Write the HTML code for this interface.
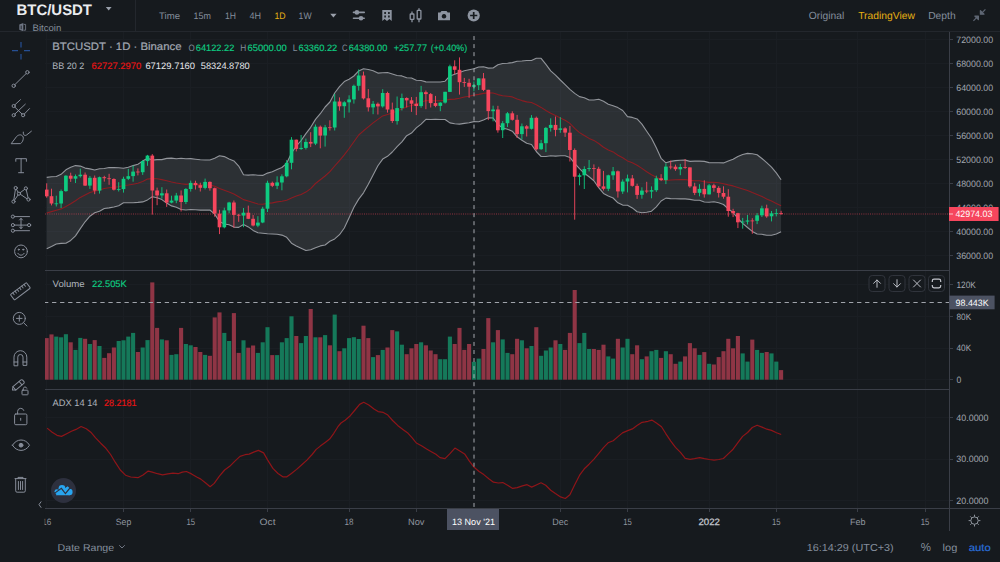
<!DOCTYPE html>
<html><head><meta charset="utf-8"><title>BTC/USDT</title>
<style>
html,body{margin:0;padding:0;background:#161a1e;}
body{width:1000px;height:562px;position:relative;overflow:hidden;font-family:"Liberation Sans",Arial,sans-serif;}
</style></head><body>
<svg width="1000" height="562" viewBox="0 0 1000 562" style="position:absolute;left:0;top:0" font-family="Liberation Sans, Arial, sans-serif" text-rendering="geometricPrecision">
<rect width="1000" height="562" fill="#161a1e"/>
<g stroke="#1a1e23" stroke-width="1" shape-rendering="crispEdges">
<line x1="46.5" y1="32" x2="46.5" y2="508"/>
<line x1="123.5" y1="32" x2="123.5" y2="508"/>
<line x1="190.5" y1="32" x2="190.5" y2="508"/>
<line x1="267.5" y1="32" x2="267.5" y2="508"/>
<line x1="349.5" y1="32" x2="349.5" y2="508"/>
<line x1="416.5" y1="32" x2="416.5" y2="508"/>
<line x1="560.5" y1="32" x2="560.5" y2="508"/>
<line x1="627.5" y1="32" x2="627.5" y2="508"/>
<line x1="709.5" y1="32" x2="709.5" y2="508"/>
<line x1="776.5" y1="32" x2="776.5" y2="508"/>
<line x1="857.5" y1="32" x2="857.5" y2="508"/>
<line x1="925.5" y1="32" x2="925.5" y2="508"/>
<line x1="45" y1="255.5" x2="949" y2="255.5"/>
<line x1="45" y1="231.5" x2="949" y2="231.5"/>
<line x1="45" y1="207.5" x2="949" y2="207.5"/>
<line x1="45" y1="183.5" x2="949" y2="183.5"/>
<line x1="45" y1="159.5" x2="949" y2="159.5"/>
<line x1="45" y1="135.5" x2="949" y2="135.5"/>
<line x1="45" y1="111.5" x2="949" y2="111.5"/>
<line x1="45" y1="87.5" x2="949" y2="87.5"/>
<line x1="45" y1="63.5" x2="949" y2="63.5"/>
<line x1="45" y1="39.5" x2="949" y2="39.5"/>
<line x1="45" y1="379.5" x2="949" y2="379.5"/>
<line x1="45" y1="348.5" x2="949" y2="348.5"/>
<line x1="45" y1="316.5" x2="949" y2="316.5"/>
<line x1="45" y1="284.5" x2="949" y2="284.5"/>
<line x1="45" y1="500.5" x2="949" y2="500.5"/>
<line x1="45" y1="459.5" x2="949" y2="459.5"/>
<line x1="45" y1="417.5" x2="949" y2="417.5"/>
</g>
<defs><clipPath id="cp"><rect x="45" y="32" width="904" height="476"/></clipPath></defs>
<g clip-path="url(#cp)">
<polygon points="46.7,177.4 51.5,176.8 56.3,176.5 61.1,174.3 65.9,169.8 70.7,167.2 75.5,165.6 80.3,166.1 85.1,168.1 89.9,168.9 94.7,170.0 99.5,168.7 104.3,168.5 109.1,167.5 113.9,167.6 118.7,167.8 123.5,168.2 128.3,167.3 133.1,165.6 137.9,164.2 142.7,161.1 147.5,158.3 152.3,160.1 157.1,159.6 161.9,159.6 166.7,158.4 171.5,158.1 176.3,158.7 181.1,158.2 185.9,158.8 190.7,158.6 195.5,159.2 200.3,159.8 205.1,160.0 209.9,160.0 214.7,158.3 219.5,155.7 224.3,156.6 229.1,158.9 233.9,160.9 238.7,166.1 243.5,174.7 248.3,175.1 253.1,174.7 257.9,175.2 262.7,175.4 267.5,173.1 272.3,171.8 277.1,169.6 281.9,167.5 286.7,163.3 291.5,152.9 296.3,146.2 301.1,140.5 305.9,133.6 310.7,127.3 315.5,119.4 320.3,113.7 325.1,107.0 329.9,102.0 334.7,93.0 339.5,86.6 344.3,81.6 349.1,79.2 353.9,76.0 358.7,70.9 363.5,68.8 368.3,69.5 373.1,70.8 377.9,73.1 382.7,72.7 387.5,72.6 392.3,74.1 397.1,75.5 401.9,75.9 406.7,77.7 411.5,78.0 416.3,80.2 421.1,80.5 425.9,81.9 430.7,82.0 435.5,82.0 440.3,82.0 445.1,81.2 449.9,75.9 454.7,74.3 459.5,72.4 464.3,70.7 469.1,69.7 473.9,68.7 478.7,67.0 483.5,66.8 488.3,68.1 493.1,68.0 497.9,64.8 502.7,63.5 507.5,63.2 512.3,62.6 517.1,61.2 521.9,61.0 526.7,60.5 531.5,60.5 536.3,58.2 541.1,58.3 545.9,64.4 550.7,70.8 555.5,75.1 560.3,80.0 565.1,84.6 569.9,89.4 574.7,93.4 579.5,96.6 584.3,97.7 589.1,100.0 593.9,100.0 598.7,99.3 603.5,101.2 608.3,104.2 613.1,105.8 617.9,107.6 622.7,110.5 627.5,116.6 632.3,117.4 637.1,118.9 641.9,124.1 646.7,131.2 651.5,138.3 656.3,147.7 661.1,158.3 665.9,162.8 670.7,161.4 675.5,160.6 680.3,160.2 685.1,160.1 689.9,161.4 694.7,161.1 699.5,161.1 704.3,161.4 709.1,162.6 713.9,162.7 718.7,162.7 723.5,162.9 728.3,161.0 733.1,159.2 737.9,156.4 742.7,154.5 747.5,153.4 752.3,153.7 757.1,154.7 761.9,158.5 766.7,162.7 771.5,167.1 776.3,172.9 781.1,179.8 781.1,231.7 776.3,234.0 771.5,235.2 766.7,235.2 761.9,234.3 757.1,234.0 752.3,231.4 747.5,227.5 742.7,223.4 737.9,218.5 733.1,212.5 728.3,208.9 723.5,204.5 718.7,202.8 713.9,201.7 709.1,202.2 704.3,202.0 699.5,200.3 694.7,200.3 689.9,199.4 685.1,198.9 680.3,198.9 675.5,198.7 670.7,198.6 665.9,198.1 661.1,201.0 656.3,206.8 651.5,211.2 646.7,212.3 641.9,212.7 637.1,211.7 632.3,207.9 627.5,205.2 622.7,205.1 617.9,202.8 613.1,198.0 608.3,195.9 603.5,193.4 598.7,187.7 593.9,180.7 589.1,176.8 584.3,173.3 579.5,168.6 574.7,163.3 569.9,157.4 565.1,155.8 560.3,155.8 555.5,156.1 550.7,155.7 545.9,156.5 541.1,156.5 536.3,151.5 531.5,144.5 526.7,143.3 521.9,140.2 517.1,136.8 512.3,131.2 507.5,129.2 502.7,128.0 497.9,124.4 493.1,118.0 488.3,117.8 483.5,120.0 478.7,121.8 473.9,121.6 469.1,122.7 464.3,123.4 459.5,124.1 454.7,123.8 449.9,122.9 445.1,119.5 440.3,119.5 435.5,119.4 430.7,119.5 425.9,119.4 421.1,124.1 416.3,127.9 411.5,133.1 406.7,135.7 401.9,141.8 397.1,146.6 392.3,152.0 387.5,156.3 382.7,159.1 377.9,165.8 373.1,175.0 368.3,184.2 363.5,192.8 358.7,199.1 353.9,207.3 349.1,217.8 344.3,228.0 339.5,234.7 334.7,238.9 329.9,241.3 325.1,245.0 320.3,245.9 315.5,247.7 310.7,249.8 305.9,250.5 301.1,248.2 296.3,245.9 291.5,243.2 286.7,237.3 281.9,235.1 277.1,234.3 272.3,234.0 267.5,233.7 262.7,233.2 257.9,232.8 253.1,230.4 248.3,226.9 243.5,224.5 238.7,227.4 233.9,227.1 229.1,224.8 224.3,224.0 219.5,221.5 214.7,214.1 209.9,210.0 205.1,210.1 200.3,210.1 195.5,209.7 190.7,209.5 185.9,210.0 181.1,209.5 176.3,207.3 171.5,205.9 166.7,203.1 161.9,199.6 157.1,197.7 152.3,196.8 147.5,199.9 142.7,201.9 137.9,202.4 133.1,202.7 128.3,202.8 123.5,202.8 118.7,205.8 113.9,207.0 109.1,207.9 104.3,208.5 99.5,211.3 94.7,212.7 89.9,216.2 85.1,221.8 80.3,228.6 75.5,235.9 70.7,240.4 65.9,243.2 61.1,243.4 56.3,244.0 51.5,246.5 46.7,248.7" fill="#9a9ea8" fill-opacity="0.17"/>
<polyline points="46.7,177.4 51.5,176.8 56.3,176.5 61.1,174.3 65.9,169.8 70.7,167.2 75.5,165.6 80.3,166.1 85.1,168.1 89.9,168.9 94.7,170.0 99.5,168.7 104.3,168.5 109.1,167.5 113.9,167.6 118.7,167.8 123.5,168.2 128.3,167.3 133.1,165.6 137.9,164.2 142.7,161.1 147.5,158.3 152.3,160.1 157.1,159.6 161.9,159.6 166.7,158.4 171.5,158.1 176.3,158.7 181.1,158.2 185.9,158.8 190.7,158.6 195.5,159.2 200.3,159.8 205.1,160.0 209.9,160.0 214.7,158.3 219.5,155.7 224.3,156.6 229.1,158.9 233.9,160.9 238.7,166.1 243.5,174.7 248.3,175.1 253.1,174.7 257.9,175.2 262.7,175.4 267.5,173.1 272.3,171.8 277.1,169.6 281.9,167.5 286.7,163.3 291.5,152.9 296.3,146.2 301.1,140.5 305.9,133.6 310.7,127.3 315.5,119.4 320.3,113.7 325.1,107.0 329.9,102.0 334.7,93.0 339.5,86.6 344.3,81.6 349.1,79.2 353.9,76.0 358.7,70.9 363.5,68.8 368.3,69.5 373.1,70.8 377.9,73.1 382.7,72.7 387.5,72.6 392.3,74.1 397.1,75.5 401.9,75.9 406.7,77.7 411.5,78.0 416.3,80.2 421.1,80.5 425.9,81.9 430.7,82.0 435.5,82.0 440.3,82.0 445.1,81.2 449.9,75.9 454.7,74.3 459.5,72.4 464.3,70.7 469.1,69.7 473.9,68.7 478.7,67.0 483.5,66.8 488.3,68.1 493.1,68.0 497.9,64.8 502.7,63.5 507.5,63.2 512.3,62.6 517.1,61.2 521.9,61.0 526.7,60.5 531.5,60.5 536.3,58.2 541.1,58.3 545.9,64.4 550.7,70.8 555.5,75.1 560.3,80.0 565.1,84.6 569.9,89.4 574.7,93.4 579.5,96.6 584.3,97.7 589.1,100.0 593.9,100.0 598.7,99.3 603.5,101.2 608.3,104.2 613.1,105.8 617.9,107.6 622.7,110.5 627.5,116.6 632.3,117.4 637.1,118.9 641.9,124.1 646.7,131.2 651.5,138.3 656.3,147.7 661.1,158.3 665.9,162.8 670.7,161.4 675.5,160.6 680.3,160.2 685.1,160.1 689.9,161.4 694.7,161.1 699.5,161.1 704.3,161.4 709.1,162.6 713.9,162.7 718.7,162.7 723.5,162.9 728.3,161.0 733.1,159.2 737.9,156.4 742.7,154.5 747.5,153.4 752.3,153.7 757.1,154.7 761.9,158.5 766.7,162.7 771.5,167.1 776.3,172.9 781.1,179.8" fill="none" stroke="#92959b" stroke-width="1.1" stroke-linejoin="round"/>
<polyline points="46.7,248.7 51.5,246.5 56.3,244.0 61.1,243.4 65.9,243.2 70.7,240.4 75.5,235.9 80.3,228.6 85.1,221.8 89.9,216.2 94.7,212.7 99.5,211.3 104.3,208.5 109.1,207.9 113.9,207.0 118.7,205.8 123.5,202.8 128.3,202.8 133.1,202.7 137.9,202.4 142.7,201.9 147.5,199.9 152.3,196.8 157.1,197.7 161.9,199.6 166.7,203.1 171.5,205.9 176.3,207.3 181.1,209.5 185.9,210.0 190.7,209.5 195.5,209.7 200.3,210.1 205.1,210.1 209.9,210.0 214.7,214.1 219.5,221.5 224.3,224.0 229.1,224.8 233.9,227.1 238.7,227.4 243.5,224.5 248.3,226.9 253.1,230.4 257.9,232.8 262.7,233.2 267.5,233.7 272.3,234.0 277.1,234.3 281.9,235.1 286.7,237.3 291.5,243.2 296.3,245.9 301.1,248.2 305.9,250.5 310.7,249.8 315.5,247.7 320.3,245.9 325.1,245.0 329.9,241.3 334.7,238.9 339.5,234.7 344.3,228.0 349.1,217.8 353.9,207.3 358.7,199.1 363.5,192.8 368.3,184.2 373.1,175.0 377.9,165.8 382.7,159.1 387.5,156.3 392.3,152.0 397.1,146.6 401.9,141.8 406.7,135.7 411.5,133.1 416.3,127.9 421.1,124.1 425.9,119.4 430.7,119.5 435.5,119.4 440.3,119.5 445.1,119.5 449.9,122.9 454.7,123.8 459.5,124.1 464.3,123.4 469.1,122.7 473.9,121.6 478.7,121.8 483.5,120.0 488.3,117.8 493.1,118.0 497.9,124.4 502.7,128.0 507.5,129.2 512.3,131.2 517.1,136.8 521.9,140.2 526.7,143.3 531.5,144.5 536.3,151.5 541.1,156.5 545.9,156.5 550.7,155.7 555.5,156.1 560.3,155.8 565.1,155.8 569.9,157.4 574.7,163.3 579.5,168.6 584.3,173.3 589.1,176.8 593.9,180.7 598.7,187.7 603.5,193.4 608.3,195.9 613.1,198.0 617.9,202.8 622.7,205.1 627.5,205.2 632.3,207.9 637.1,211.7 641.9,212.7 646.7,212.3 651.5,211.2 656.3,206.8 661.1,201.0 665.9,198.1 670.7,198.6 675.5,198.7 680.3,198.9 685.1,198.9 689.9,199.4 694.7,200.3 699.5,200.3 704.3,202.0 709.1,202.2 713.9,201.7 718.7,202.8 723.5,204.5 728.3,208.9 733.1,212.5 737.9,218.5 742.7,223.4 747.5,227.5 752.3,231.4 757.1,234.0 761.9,234.3 766.7,235.2 771.5,235.2 776.3,234.0 781.1,231.7" fill="none" stroke="#92959b" stroke-width="1.1" stroke-linejoin="round"/>
<polyline points="46.7,213.0 51.5,211.6 56.3,210.2 61.1,208.9 65.9,206.5 70.7,203.8 75.5,200.8 80.3,197.4 85.1,195.0 89.9,192.5 94.7,191.3 99.5,190.0 104.3,188.5 109.1,187.7 113.9,187.3 118.7,186.8 123.5,185.5 128.3,185.0 133.1,184.2 137.9,183.3 142.7,181.5 147.5,179.1 152.3,178.5 157.1,178.7 161.9,179.6 166.7,180.8 171.5,182.0 176.3,183.0 181.1,183.8 185.9,184.4 190.7,184.0 195.5,184.4 200.3,184.9 205.1,185.0 209.9,185.0 214.7,186.2 219.5,188.6 224.3,190.3 229.1,191.9 233.9,194.0 238.7,196.7 243.5,199.6 248.3,201.0 253.1,202.5 257.9,204.0 262.7,204.3 267.5,203.4 272.3,202.9 277.1,201.9 281.9,201.3 286.7,200.3 291.5,198.0 296.3,196.1 301.1,194.4 305.9,192.1 310.7,188.6 315.5,183.5 320.3,179.8 325.1,176.0 329.9,171.7 334.7,166.0 339.5,160.6 344.3,154.8 349.1,148.5 353.9,141.7 358.7,135.0 363.5,130.8 368.3,126.9 373.1,122.9 377.9,119.4 382.7,115.9 387.5,114.4 392.3,113.0 397.1,111.0 401.9,108.9 406.7,106.7 411.5,105.5 416.3,104.1 421.1,102.3 425.9,100.6 430.7,100.7 435.5,100.7 440.3,100.7 445.1,100.3 449.9,99.4 454.7,99.1 459.5,98.3 464.3,97.0 469.1,96.2 473.9,95.1 478.7,94.4 483.5,93.4 488.3,92.9 493.1,93.0 497.9,94.6 502.7,95.7 507.5,96.2 512.3,96.9 517.1,99.0 521.9,100.6 526.7,101.9 531.5,102.5 536.3,104.8 541.1,107.4 545.9,110.5 550.7,113.2 555.5,115.6 560.3,117.9 565.1,120.2 569.9,123.4 574.7,128.3 579.5,132.6 584.3,135.5 589.1,138.4 593.9,140.4 598.7,143.5 603.5,147.3 608.3,150.1 613.1,151.9 617.9,155.2 622.7,157.8 627.5,160.9 632.3,162.7 637.1,165.3 641.9,168.4 646.7,171.7 651.5,174.8 656.3,177.3 661.1,179.6 665.9,180.5 670.7,180.0 675.5,179.7 680.3,179.6 685.1,179.5 689.9,180.4 694.7,180.7 699.5,180.7 704.3,181.7 709.1,182.4 713.9,182.2 718.7,182.8 723.5,183.7 728.3,184.9 733.1,185.9 737.9,187.4 742.7,188.9 747.5,190.5 752.3,192.6 757.1,194.4 761.9,196.4 766.7,198.9 771.5,201.1 776.3,203.4 781.1,205.8" fill="none" stroke="#8c1c22" stroke-width="1.1" stroke-linejoin="round"/>
<line x1="45" y1="214" x2="949" y2="214" stroke="#f6465d" stroke-width="1" stroke-dasharray="1 1.2" opacity="0.55"/>
<line x1="46.70" y1="183.3" x2="46.70" y2="197.7" stroke="#f6465d" stroke-width="0.9"/>
<rect x="44.85" y="189.6" width="3.7" height="6.7" fill="#f6465d"/>
<line x1="51.50" y1="188.7" x2="51.50" y2="205.4" stroke="#f6465d" stroke-width="0.9"/>
<rect x="49.65" y="196.2" width="3.7" height="7.3" fill="#f6465d"/>
<line x1="56.30" y1="195.7" x2="56.30" y2="206.5" stroke="#0ecb81" stroke-width="0.9"/>
<rect x="54.45" y="203.4" width="3.7" height="0.8" fill="#0ecb81"/>
<line x1="61.10" y1="189.5" x2="61.10" y2="208.1" stroke="#0ecb81" stroke-width="0.9"/>
<rect x="59.25" y="191.1" width="3.7" height="12.4" fill="#0ecb81"/>
<line x1="65.90" y1="175.2" x2="65.90" y2="191.8" stroke="#0ecb81" stroke-width="0.9"/>
<rect x="64.05" y="175.7" width="3.7" height="15.4" fill="#0ecb81"/>
<line x1="70.70" y1="172.7" x2="70.70" y2="181.9" stroke="#f6465d" stroke-width="0.9"/>
<rect x="68.85" y="175.7" width="3.7" height="3.0" fill="#f6465d"/>
<line x1="75.50" y1="174.5" x2="75.50" y2="183.0" stroke="#0ecb81" stroke-width="0.9"/>
<rect x="73.65" y="176.2" width="3.7" height="2.5" fill="#0ecb81"/>
<line x1="80.30" y1="168.6" x2="80.30" y2="177.6" stroke="#0ecb81" stroke-width="0.9"/>
<rect x="78.45" y="174.7" width="3.7" height="1.5" fill="#0ecb81"/>
<line x1="85.10" y1="172.5" x2="85.10" y2="186.0" stroke="#f6465d" stroke-width="0.9"/>
<rect x="83.25" y="174.7" width="3.7" height="10.9" fill="#f6465d"/>
<line x1="89.90" y1="176.0" x2="89.90" y2="188.9" stroke="#0ecb81" stroke-width="0.9"/>
<rect x="88.05" y="177.8" width="3.7" height="7.8" fill="#0ecb81"/>
<line x1="94.70" y1="175.5" x2="94.70" y2="194.2" stroke="#f6465d" stroke-width="0.9"/>
<rect x="92.85" y="177.8" width="3.7" height="12.8" fill="#f6465d"/>
<line x1="99.50" y1="176.6" x2="99.50" y2="193.6" stroke="#0ecb81" stroke-width="0.9"/>
<rect x="97.65" y="177.2" width="3.7" height="13.4" fill="#0ecb81"/>
<line x1="104.30" y1="175.8" x2="104.30" y2="181.6" stroke="#f6465d" stroke-width="0.9"/>
<rect x="102.45" y="177.2" width="3.7" height="1.0" fill="#f6465d"/>
<line x1="109.10" y1="173.8" x2="109.10" y2="184.8" stroke="#f6465d" stroke-width="0.9"/>
<rect x="107.25" y="178.3" width="3.7" height="0.8" fill="#f6465d"/>
<line x1="113.90" y1="178.3" x2="113.90" y2="190.5" stroke="#f6465d" stroke-width="0.9"/>
<rect x="112.05" y="179.0" width="3.7" height="10.7" fill="#f6465d"/>
<line x1="118.70" y1="182.2" x2="118.70" y2="191.5" stroke="#0ecb81" stroke-width="0.9"/>
<rect x="116.85" y="189.0" width="3.7" height="0.8" fill="#0ecb81"/>
<line x1="123.50" y1="176.7" x2="123.50" y2="192.6" stroke="#0ecb81" stroke-width="0.9"/>
<rect x="121.65" y="178.8" width="3.7" height="10.3" fill="#0ecb81"/>
<line x1="128.30" y1="168.9" x2="128.30" y2="180.1" stroke="#0ecb81" stroke-width="0.9"/>
<rect x="126.45" y="176.2" width="3.7" height="2.6" fill="#0ecb81"/>
<line x1="133.10" y1="165.6" x2="133.10" y2="181.7" stroke="#0ecb81" stroke-width="0.9"/>
<rect x="131.25" y="171.6" width="3.7" height="4.5" fill="#0ecb81"/>
<line x1="137.90" y1="168.4" x2="137.90" y2="175.4" stroke="#f6465d" stroke-width="0.9"/>
<rect x="136.05" y="171.6" width="3.7" height="0.8" fill="#f6465d"/>
<line x1="142.70" y1="160.2" x2="142.70" y2="174.9" stroke="#0ecb81" stroke-width="0.9"/>
<rect x="140.85" y="161.1" width="3.7" height="11.1" fill="#0ecb81"/>
<line x1="147.50" y1="154.9" x2="147.50" y2="165.8" stroke="#0ecb81" stroke-width="0.9"/>
<rect x="145.65" y="155.6" width="3.7" height="5.5" fill="#0ecb81"/>
<line x1="152.30" y1="154.1" x2="152.30" y2="214.6" stroke="#f6465d" stroke-width="0.9"/>
<rect x="150.45" y="155.6" width="3.7" height="34.9" fill="#f6465d"/>
<line x1="157.10" y1="187.6" x2="157.10" y2="205.2" stroke="#f6465d" stroke-width="0.9"/>
<rect x="155.25" y="190.5" width="3.7" height="4.9" fill="#f6465d"/>
<line x1="161.90" y1="187.2" x2="161.90" y2="198.6" stroke="#0ecb81" stroke-width="0.9"/>
<rect x="160.05" y="193.3" width="3.7" height="2.1" fill="#0ecb81"/>
<line x1="166.70" y1="189.5" x2="166.70" y2="206.9" stroke="#f6465d" stroke-width="0.9"/>
<rect x="164.85" y="193.3" width="3.7" height="9.3" fill="#f6465d"/>
<line x1="171.50" y1="195.7" x2="171.50" y2="203.3" stroke="#0ecb81" stroke-width="0.9"/>
<rect x="169.65" y="200.6" width="3.7" height="2.0" fill="#0ecb81"/>
<line x1="176.30" y1="192.9" x2="176.30" y2="203.2" stroke="#0ecb81" stroke-width="0.9"/>
<rect x="174.45" y="195.5" width="3.7" height="5.1" fill="#0ecb81"/>
<line x1="181.10" y1="190.4" x2="181.10" y2="211.5" stroke="#f6465d" stroke-width="0.9"/>
<rect x="179.25" y="195.5" width="3.7" height="6.5" fill="#f6465d"/>
<line x1="185.90" y1="188.1" x2="185.90" y2="204.1" stroke="#0ecb81" stroke-width="0.9"/>
<rect x="184.05" y="189.0" width="3.7" height="13.0" fill="#0ecb81"/>
<line x1="190.70" y1="180.6" x2="190.70" y2="191.6" stroke="#0ecb81" stroke-width="0.9"/>
<rect x="188.85" y="182.9" width="3.7" height="6.1" fill="#0ecb81"/>
<line x1="195.50" y1="180.7" x2="195.50" y2="189.5" stroke="#f6465d" stroke-width="0.9"/>
<rect x="193.65" y="182.9" width="3.7" height="2.3" fill="#f6465d"/>
<line x1="200.30" y1="182.7" x2="200.30" y2="191.5" stroke="#f6465d" stroke-width="0.9"/>
<rect x="198.45" y="185.2" width="3.7" height="2.6" fill="#f6465d"/>
<line x1="205.10" y1="178.6" x2="205.10" y2="189.4" stroke="#0ecb81" stroke-width="0.9"/>
<rect x="203.25" y="181.9" width="3.7" height="6.0" fill="#0ecb81"/>
<line x1="209.90" y1="181.4" x2="209.90" y2="190.7" stroke="#f6465d" stroke-width="0.9"/>
<rect x="208.05" y="181.9" width="3.7" height="6.3" fill="#f6465d"/>
<line x1="214.70" y1="187.6" x2="214.70" y2="216.7" stroke="#f6465d" stroke-width="0.9"/>
<rect x="212.85" y="188.2" width="3.7" height="25.4" fill="#f6465d"/>
<line x1="219.50" y1="209.8" x2="219.50" y2="234.1" stroke="#f6465d" stroke-width="0.9"/>
<rect x="217.65" y="213.6" width="3.7" height="13.7" fill="#f6465d"/>
<line x1="224.30" y1="207.7" x2="224.30" y2="228.3" stroke="#0ecb81" stroke-width="0.9"/>
<rect x="222.45" y="210.4" width="3.7" height="16.9" fill="#0ecb81"/>
<line x1="229.10" y1="201.8" x2="229.10" y2="213.3" stroke="#0ecb81" stroke-width="0.9"/>
<rect x="227.25" y="202.5" width="3.7" height="7.9" fill="#0ecb81"/>
<line x1="233.90" y1="200.5" x2="233.90" y2="227.7" stroke="#f6465d" stroke-width="0.9"/>
<rect x="232.05" y="202.5" width="3.7" height="12.4" fill="#f6465d"/>
<line x1="238.70" y1="213.9" x2="238.70" y2="221.8" stroke="#f6465d" stroke-width="0.9"/>
<rect x="236.85" y="214.8" width="3.7" height="0.8" fill="#f6465d"/>
<line x1="243.50" y1="208.0" x2="243.50" y2="227.2" stroke="#0ecb81" stroke-width="0.9"/>
<rect x="241.65" y="212.7" width="3.7" height="2.9" fill="#0ecb81"/>
<line x1="248.30" y1="205.6" x2="248.30" y2="219.1" stroke="#f6465d" stroke-width="0.9"/>
<rect x="246.45" y="212.7" width="3.7" height="6.1" fill="#f6465d"/>
<line x1="253.10" y1="215.0" x2="253.10" y2="226.4" stroke="#f6465d" stroke-width="0.9"/>
<rect x="251.25" y="218.8" width="3.7" height="6.7" fill="#f6465d"/>
<line x1="257.90" y1="216.2" x2="257.90" y2="227.2" stroke="#0ecb81" stroke-width="0.9"/>
<rect x="256.05" y="222.6" width="3.7" height="3.0" fill="#0ecb81"/>
<line x1="262.70" y1="206.8" x2="262.70" y2="223.2" stroke="#0ecb81" stroke-width="0.9"/>
<rect x="260.85" y="208.7" width="3.7" height="13.8" fill="#0ecb81"/>
<line x1="267.50" y1="180.7" x2="267.50" y2="212.0" stroke="#0ecb81" stroke-width="0.9"/>
<rect x="265.65" y="182.8" width="3.7" height="25.9" fill="#0ecb81"/>
<line x1="272.30" y1="181.6" x2="272.30" y2="187.1" stroke="#f6465d" stroke-width="0.9"/>
<rect x="270.45" y="182.8" width="3.7" height="3.0" fill="#f6465d"/>
<line x1="277.10" y1="176.3" x2="277.10" y2="189.1" stroke="#0ecb81" stroke-width="0.9"/>
<rect x="275.25" y="182.4" width="3.7" height="3.4" fill="#0ecb81"/>
<line x1="281.90" y1="174.4" x2="281.90" y2="190.3" stroke="#0ecb81" stroke-width="0.9"/>
<rect x="280.05" y="176.3" width="3.7" height="6.2" fill="#0ecb81"/>
<line x1="286.70" y1="160.1" x2="286.70" y2="177.3" stroke="#0ecb81" stroke-width="0.9"/>
<rect x="284.85" y="162.8" width="3.7" height="13.5" fill="#0ecb81"/>
<line x1="291.50" y1="137.1" x2="291.50" y2="169.3" stroke="#0ecb81" stroke-width="0.9"/>
<rect x="289.65" y="139.7" width="3.7" height="23.1" fill="#0ecb81"/>
<line x1="296.30" y1="139.6" x2="296.30" y2="151.4" stroke="#f6465d" stroke-width="0.9"/>
<rect x="294.45" y="139.7" width="3.7" height="9.2" fill="#f6465d"/>
<line x1="301.10" y1="135.0" x2="301.10" y2="149.9" stroke="#0ecb81" stroke-width="0.9"/>
<rect x="299.25" y="147.9" width="3.7" height="1.0" fill="#0ecb81"/>
<line x1="305.90" y1="138.6" x2="305.90" y2="149.5" stroke="#0ecb81" stroke-width="0.9"/>
<rect x="304.05" y="141.9" width="3.7" height="6.0" fill="#0ecb81"/>
<line x1="310.70" y1="132.2" x2="310.70" y2="147.1" stroke="#f6465d" stroke-width="0.9"/>
<rect x="308.85" y="141.9" width="3.7" height="1.7" fill="#f6465d"/>
<line x1="315.50" y1="124.5" x2="315.50" y2="145.1" stroke="#0ecb81" stroke-width="0.9"/>
<rect x="313.65" y="126.7" width="3.7" height="16.9" fill="#0ecb81"/>
<line x1="320.30" y1="125.5" x2="320.30" y2="148.3" stroke="#f6465d" stroke-width="0.9"/>
<rect x="318.45" y="126.7" width="3.7" height="8.9" fill="#f6465d"/>
<line x1="325.10" y1="124.9" x2="325.10" y2="146.6" stroke="#0ecb81" stroke-width="0.9"/>
<rect x="323.25" y="127.3" width="3.7" height="8.2" fill="#0ecb81"/>
<line x1="329.90" y1="120.3" x2="329.90" y2="130.6" stroke="#f6465d" stroke-width="0.9"/>
<rect x="328.05" y="127.3" width="3.7" height="0.8" fill="#f6465d"/>
<line x1="334.70" y1="93.9" x2="334.70" y2="130.5" stroke="#0ecb81" stroke-width="0.9"/>
<rect x="332.85" y="101.5" width="3.7" height="26.0" fill="#0ecb81"/>
<line x1="339.50" y1="97.4" x2="339.50" y2="110.7" stroke="#f6465d" stroke-width="0.9"/>
<rect x="337.65" y="101.5" width="3.7" height="4.8" fill="#f6465d"/>
<line x1="344.30" y1="101.2" x2="344.30" y2="117.8" stroke="#0ecb81" stroke-width="0.9"/>
<rect x="342.45" y="102.3" width="3.7" height="3.9" fill="#0ecb81"/>
<line x1="349.10" y1="95.3" x2="349.10" y2="112.5" stroke="#0ecb81" stroke-width="0.9"/>
<rect x="347.25" y="99.4" width="3.7" height="2.9" fill="#0ecb81"/>
<line x1="353.90" y1="84.6" x2="353.90" y2="103.6" stroke="#0ecb81" stroke-width="0.9"/>
<rect x="352.05" y="85.8" width="3.7" height="13.6" fill="#0ecb81"/>
<line x1="358.70" y1="69.4" x2="358.70" y2="90.6" stroke="#0ecb81" stroke-width="0.9"/>
<rect x="356.85" y="75.5" width="3.7" height="10.3" fill="#0ecb81"/>
<line x1="363.50" y1="71.6" x2="363.50" y2="99.5" stroke="#f6465d" stroke-width="0.9"/>
<rect x="361.65" y="75.5" width="3.7" height="22.9" fill="#f6465d"/>
<line x1="368.30" y1="89.1" x2="368.30" y2="111.5" stroke="#f6465d" stroke-width="0.9"/>
<rect x="366.45" y="98.3" width="3.7" height="9.0" fill="#f6465d"/>
<line x1="373.10" y1="101.0" x2="373.10" y2="114.2" stroke="#0ecb81" stroke-width="0.9"/>
<rect x="371.25" y="103.8" width="3.7" height="3.6" fill="#0ecb81"/>
<line x1="377.90" y1="102.5" x2="377.90" y2="114.5" stroke="#f6465d" stroke-width="0.9"/>
<rect x="376.05" y="103.8" width="3.7" height="2.6" fill="#f6465d"/>
<line x1="382.70" y1="89.2" x2="382.70" y2="107.6" stroke="#0ecb81" stroke-width="0.9"/>
<rect x="380.85" y="93.0" width="3.7" height="13.4" fill="#0ecb81"/>
<line x1="387.50" y1="91.7" x2="387.50" y2="112.6" stroke="#f6465d" stroke-width="0.9"/>
<rect x="385.65" y="93.0" width="3.7" height="16.5" fill="#f6465d"/>
<line x1="392.30" y1="102.6" x2="392.30" y2="122.9" stroke="#f6465d" stroke-width="0.9"/>
<rect x="390.45" y="109.5" width="3.7" height="11.5" fill="#f6465d"/>
<line x1="397.10" y1="96.5" x2="397.10" y2="124.6" stroke="#0ecb81" stroke-width="0.9"/>
<rect x="395.25" y="108.1" width="3.7" height="13.0" fill="#0ecb81"/>
<line x1="401.90" y1="93.6" x2="401.90" y2="110.5" stroke="#0ecb81" stroke-width="0.9"/>
<rect x="400.05" y="98.0" width="3.7" height="10.1" fill="#0ecb81"/>
<line x1="406.70" y1="97.3" x2="406.70" y2="107.5" stroke="#f6465d" stroke-width="0.9"/>
<rect x="404.85" y="98.0" width="3.7" height="2.4" fill="#f6465d"/>
<line x1="411.50" y1="97.1" x2="411.50" y2="111.9" stroke="#f6465d" stroke-width="0.9"/>
<rect x="409.65" y="100.3" width="3.7" height="3.4" fill="#f6465d"/>
<line x1="416.30" y1="96.9" x2="416.30" y2="115.1" stroke="#f6465d" stroke-width="0.9"/>
<rect x="414.45" y="103.7" width="3.7" height="2.3" fill="#f6465d"/>
<line x1="421.10" y1="85.9" x2="421.10" y2="107.8" stroke="#0ecb81" stroke-width="0.9"/>
<rect x="419.25" y="92.2" width="3.7" height="13.9" fill="#0ecb81"/>
<line x1="425.90" y1="90.5" x2="425.90" y2="109.2" stroke="#f6465d" stroke-width="0.9"/>
<rect x="424.05" y="92.2" width="3.7" height="1.9" fill="#f6465d"/>
<line x1="430.70" y1="93.0" x2="430.70" y2="107.5" stroke="#f6465d" stroke-width="0.9"/>
<rect x="428.85" y="94.1" width="3.7" height="9.0" fill="#f6465d"/>
<line x1="435.50" y1="95.9" x2="435.50" y2="107.2" stroke="#f6465d" stroke-width="0.9"/>
<rect x="433.65" y="103.1" width="3.7" height="2.8" fill="#f6465d"/>
<line x1="440.30" y1="102.1" x2="440.30" y2="111.2" stroke="#0ecb81" stroke-width="0.9"/>
<rect x="438.45" y="102.7" width="3.7" height="3.2" fill="#0ecb81"/>
<line x1="445.10" y1="91.8" x2="445.10" y2="103.6" stroke="#0ecb81" stroke-width="0.9"/>
<rect x="443.25" y="91.8" width="3.7" height="10.8" fill="#0ecb81"/>
<line x1="449.90" y1="64.7" x2="449.90" y2="91.8" stroke="#0ecb81" stroke-width="0.9"/>
<rect x="448.05" y="66.3" width="3.7" height="25.6" fill="#0ecb81"/>
<line x1="454.70" y1="60.3" x2="454.70" y2="74.1" stroke="#f6465d" stroke-width="0.9"/>
<rect x="452.85" y="66.3" width="3.7" height="3.5" fill="#f6465d"/>
<line x1="459.50" y1="57.4" x2="459.50" y2="94.6" stroke="#f6465d" stroke-width="0.9"/>
<rect x="457.65" y="69.8" width="3.7" height="12.4" fill="#f6465d"/>
<line x1="464.30" y1="77.9" x2="464.30" y2="86.9" stroke="#f6465d" stroke-width="0.9"/>
<rect x="462.45" y="82.2" width="3.7" height="0.8" fill="#f6465d"/>
<line x1="469.10" y1="78.8" x2="469.10" y2="97.8" stroke="#f6465d" stroke-width="0.9"/>
<rect x="467.25" y="82.8" width="3.7" height="3.9" fill="#f6465d"/>
<line x1="473.90" y1="81.5" x2="473.90" y2="91.3" stroke="#0ecb81" stroke-width="0.9"/>
<rect x="472.05" y="85.2" width="3.7" height="1.6" fill="#0ecb81"/>
<line x1="478.70" y1="78.3" x2="478.70" y2="90.0" stroke="#0ecb81" stroke-width="0.9"/>
<rect x="476.85" y="78.4" width="3.7" height="6.8" fill="#0ecb81"/>
<line x1="483.50" y1="73.0" x2="483.50" y2="91.1" stroke="#f6465d" stroke-width="0.9"/>
<rect x="481.65" y="78.4" width="3.7" height="11.5" fill="#f6465d"/>
<line x1="488.30" y1="89.8" x2="488.30" y2="120.1" stroke="#f6465d" stroke-width="0.9"/>
<rect x="486.45" y="89.8" width="3.7" height="21.3" fill="#f6465d"/>
<line x1="493.10" y1="105.7" x2="493.10" y2="121.3" stroke="#0ecb81" stroke-width="0.9"/>
<rect x="491.25" y="109.5" width="3.7" height="1.7" fill="#0ecb81"/>
<line x1="497.90" y1="105.8" x2="497.90" y2="132.7" stroke="#f6465d" stroke-width="0.9"/>
<rect x="496.05" y="109.5" width="3.7" height="20.8" fill="#f6465d"/>
<line x1="502.70" y1="121.1" x2="502.70" y2="138.0" stroke="#0ecb81" stroke-width="0.9"/>
<rect x="500.85" y="123.2" width="3.7" height="7.0" fill="#0ecb81"/>
<line x1="507.50" y1="112.1" x2="507.50" y2="127.0" stroke="#0ecb81" stroke-width="0.9"/>
<rect x="505.65" y="113.3" width="3.7" height="9.9" fill="#0ecb81"/>
<line x1="512.30" y1="111.3" x2="512.30" y2="120.6" stroke="#f6465d" stroke-width="0.9"/>
<rect x="510.45" y="113.3" width="3.7" height="6.5" fill="#f6465d"/>
<line x1="517.10" y1="114.9" x2="517.10" y2="137.9" stroke="#f6465d" stroke-width="0.9"/>
<rect x="515.25" y="119.8" width="3.7" height="14.3" fill="#f6465d"/>
<line x1="521.90" y1="123.5" x2="521.90" y2="139.7" stroke="#0ecb81" stroke-width="0.9"/>
<rect x="520.05" y="126.3" width="3.7" height="7.8" fill="#0ecb81"/>
<line x1="526.70" y1="125.1" x2="526.70" y2="136.5" stroke="#f6465d" stroke-width="0.9"/>
<rect x="524.85" y="126.3" width="3.7" height="2.4" fill="#f6465d"/>
<line x1="531.50" y1="115.1" x2="531.50" y2="129.5" stroke="#0ecb81" stroke-width="0.9"/>
<rect x="529.65" y="117.8" width="3.7" height="11.0" fill="#0ecb81"/>
<line x1="536.30" y1="116.6" x2="536.30" y2="150.6" stroke="#f6465d" stroke-width="0.9"/>
<rect x="534.45" y="117.8" width="3.7" height="31.5" fill="#f6465d"/>
<line x1="541.10" y1="139.9" x2="541.10" y2="149.9" stroke="#0ecb81" stroke-width="0.9"/>
<rect x="539.25" y="143.2" width="3.7" height="6.0" fill="#0ecb81"/>
<line x1="545.90" y1="126.9" x2="545.90" y2="152.1" stroke="#0ecb81" stroke-width="0.9"/>
<rect x="544.05" y="127.9" width="3.7" height="15.3" fill="#0ecb81"/>
<line x1="550.70" y1="118.3" x2="550.70" y2="131.6" stroke="#0ecb81" stroke-width="0.9"/>
<rect x="548.85" y="124.9" width="3.7" height="3.0" fill="#0ecb81"/>
<line x1="555.50" y1="116.5" x2="555.50" y2="136.3" stroke="#f6465d" stroke-width="0.9"/>
<rect x="553.65" y="124.9" width="3.7" height="5.0" fill="#f6465d"/>
<line x1="560.30" y1="117.2" x2="560.30" y2="132.8" stroke="#0ecb81" stroke-width="0.9"/>
<rect x="558.45" y="128.4" width="3.7" height="1.4" fill="#0ecb81"/>
<line x1="565.10" y1="127.3" x2="565.10" y2="136.9" stroke="#f6465d" stroke-width="0.9"/>
<rect x="563.25" y="128.4" width="3.7" height="4.2" fill="#f6465d"/>
<line x1="569.90" y1="125.9" x2="569.90" y2="161.5" stroke="#f6465d" stroke-width="0.9"/>
<rect x="568.05" y="132.7" width="3.7" height="17.3" fill="#f6465d"/>
<line x1="574.70" y1="148.4" x2="574.70" y2="219.7" stroke="#f6465d" stroke-width="0.9"/>
<rect x="572.85" y="150.0" width="3.7" height="26.7" fill="#f6465d"/>
<line x1="579.50" y1="173.4" x2="579.50" y2="185.3" stroke="#0ecb81" stroke-width="0.9"/>
<rect x="577.65" y="175.3" width="3.7" height="1.5" fill="#0ecb81"/>
<line x1="584.30" y1="166.3" x2="584.30" y2="189.0" stroke="#0ecb81" stroke-width="0.9"/>
<rect x="582.45" y="169.0" width="3.7" height="6.3" fill="#0ecb81"/>
<line x1="589.10" y1="160.0" x2="589.10" y2="171.4" stroke="#0ecb81" stroke-width="0.9"/>
<rect x="587.25" y="168.1" width="3.7" height="0.9" fill="#0ecb81"/>
<line x1="593.90" y1="164.4" x2="593.90" y2="180.0" stroke="#f6465d" stroke-width="0.9"/>
<rect x="592.05" y="168.1" width="3.7" height="0.8" fill="#f6465d"/>
<line x1="598.70" y1="166.8" x2="598.70" y2="187.7" stroke="#f6465d" stroke-width="0.9"/>
<rect x="596.85" y="168.8" width="3.7" height="17.6" fill="#f6465d"/>
<line x1="603.50" y1="170.9" x2="603.50" y2="190.5" stroke="#f6465d" stroke-width="0.9"/>
<rect x="601.65" y="186.4" width="3.7" height="2.4" fill="#f6465d"/>
<line x1="608.30" y1="174.7" x2="608.30" y2="191.1" stroke="#0ecb81" stroke-width="0.9"/>
<rect x="606.45" y="175.3" width="3.7" height="13.5" fill="#0ecb81"/>
<line x1="613.10" y1="167.0" x2="613.10" y2="179.8" stroke="#0ecb81" stroke-width="0.9"/>
<rect x="611.25" y="171.3" width="3.7" height="4.0" fill="#0ecb81"/>
<line x1="617.90" y1="170.5" x2="617.90" y2="197.6" stroke="#f6465d" stroke-width="0.9"/>
<rect x="616.05" y="171.3" width="3.7" height="20.1" fill="#f6465d"/>
<line x1="622.70" y1="179.4" x2="622.70" y2="193.9" stroke="#0ecb81" stroke-width="0.9"/>
<rect x="620.85" y="181.6" width="3.7" height="9.9" fill="#0ecb81"/>
<line x1="627.50" y1="174.6" x2="627.50" y2="192.4" stroke="#0ecb81" stroke-width="0.9"/>
<rect x="625.65" y="178.4" width="3.7" height="3.1" fill="#0ecb81"/>
<line x1="632.30" y1="175.0" x2="632.30" y2="186.6" stroke="#f6465d" stroke-width="0.9"/>
<rect x="630.45" y="178.4" width="3.7" height="7.4" fill="#f6465d"/>
<line x1="637.10" y1="183.7" x2="637.10" y2="198.9" stroke="#f6465d" stroke-width="0.9"/>
<rect x="635.25" y="185.9" width="3.7" height="9.0" fill="#f6465d"/>
<line x1="641.90" y1="187.3" x2="641.90" y2="198.7" stroke="#0ecb81" stroke-width="0.9"/>
<rect x="640.05" y="190.6" width="3.7" height="4.2" fill="#0ecb81"/>
<line x1="646.70" y1="181.8" x2="646.70" y2="193.2" stroke="#f6465d" stroke-width="0.9"/>
<rect x="644.85" y="190.6" width="3.7" height="0.9" fill="#f6465d"/>
<line x1="651.50" y1="186.4" x2="651.50" y2="198.3" stroke="#0ecb81" stroke-width="0.9"/>
<rect x="649.65" y="190.2" width="3.7" height="1.4" fill="#0ecb81"/>
<line x1="656.30" y1="175.7" x2="656.30" y2="191.9" stroke="#0ecb81" stroke-width="0.9"/>
<rect x="654.45" y="178.3" width="3.7" height="11.9" fill="#0ecb81"/>
<line x1="661.10" y1="174.2" x2="661.10" y2="181.1" stroke="#f6465d" stroke-width="0.9"/>
<rect x="659.25" y="178.3" width="3.7" height="1.8" fill="#f6465d"/>
<line x1="665.90" y1="163.4" x2="665.90" y2="184.1" stroke="#0ecb81" stroke-width="0.9"/>
<rect x="664.05" y="166.6" width="3.7" height="13.5" fill="#0ecb81"/>
<line x1="670.70" y1="160.7" x2="670.70" y2="169.3" stroke="#f6465d" stroke-width="0.9"/>
<rect x="668.85" y="166.6" width="3.7" height="0.8" fill="#f6465d"/>
<line x1="675.50" y1="164.6" x2="675.50" y2="170.8" stroke="#f6465d" stroke-width="0.9"/>
<rect x="673.65" y="166.7" width="3.7" height="2.5" fill="#f6465d"/>
<line x1="680.30" y1="163.9" x2="680.30" y2="175.2" stroke="#0ecb81" stroke-width="0.9"/>
<rect x="678.45" y="167.0" width="3.7" height="2.3" fill="#0ecb81"/>
<line x1="685.10" y1="159.1" x2="685.10" y2="168.9" stroke="#f6465d" stroke-width="0.9"/>
<rect x="683.25" y="167.0" width="3.7" height="0.8" fill="#f6465d"/>
<line x1="689.90" y1="167.4" x2="689.90" y2="187.8" stroke="#f6465d" stroke-width="0.9"/>
<rect x="688.05" y="167.4" width="3.7" height="19.0" fill="#f6465d"/>
<line x1="694.70" y1="182.8" x2="694.70" y2="195.1" stroke="#f6465d" stroke-width="0.9"/>
<rect x="692.85" y="186.4" width="3.7" height="6.5" fill="#f6465d"/>
<line x1="699.50" y1="184.2" x2="699.50" y2="196.3" stroke="#0ecb81" stroke-width="0.9"/>
<rect x="697.65" y="188.9" width="3.7" height="3.9" fill="#0ecb81"/>
<line x1="704.30" y1="180.3" x2="704.30" y2="197.6" stroke="#f6465d" stroke-width="0.9"/>
<rect x="702.45" y="188.9" width="3.7" height="5.4" fill="#f6465d"/>
<line x1="709.10" y1="183.9" x2="709.10" y2="194.4" stroke="#0ecb81" stroke-width="0.9"/>
<rect x="707.25" y="185.3" width="3.7" height="9.1" fill="#0ecb81"/>
<line x1="713.90" y1="183.7" x2="713.90" y2="191.7" stroke="#f6465d" stroke-width="0.9"/>
<rect x="712.05" y="185.3" width="3.7" height="2.6" fill="#f6465d"/>
<line x1="718.70" y1="186.2" x2="718.70" y2="197.5" stroke="#f6465d" stroke-width="0.9"/>
<rect x="716.85" y="187.9" width="3.7" height="5.0" fill="#f6465d"/>
<line x1="723.50" y1="186.3" x2="723.50" y2="198.7" stroke="#f6465d" stroke-width="0.9"/>
<rect x="721.65" y="193.0" width="3.7" height="3.7" fill="#f6465d"/>
<line x1="728.30" y1="189.2" x2="728.30" y2="216.7" stroke="#f6465d" stroke-width="0.9"/>
<rect x="726.45" y="196.7" width="3.7" height="14.3" fill="#f6465d"/>
<line x1="733.10" y1="208.8" x2="733.10" y2="217.1" stroke="#f6465d" stroke-width="0.9"/>
<rect x="731.25" y="211.0" width="3.7" height="2.2" fill="#f6465d"/>
<line x1="737.90" y1="212.8" x2="737.90" y2="228.1" stroke="#f6465d" stroke-width="0.9"/>
<rect x="736.05" y="213.2" width="3.7" height="9.1" fill="#f6465d"/>
<line x1="742.70" y1="217.9" x2="742.70" y2="228.7" stroke="#0ecb81" stroke-width="0.9"/>
<rect x="740.85" y="221.6" width="3.7" height="0.8" fill="#0ecb81"/>
<line x1="747.50" y1="215.0" x2="747.50" y2="224.5" stroke="#0ecb81" stroke-width="0.9"/>
<rect x="745.65" y="220.5" width="3.7" height="1.1" fill="#0ecb81"/>
<line x1="752.30" y1="218.2" x2="752.30" y2="233.8" stroke="#f6465d" stroke-width="0.9"/>
<rect x="750.45" y="220.5" width="3.7" height="0.8" fill="#f6465d"/>
<line x1="757.10" y1="213.1" x2="757.10" y2="224.1" stroke="#0ecb81" stroke-width="0.9"/>
<rect x="755.25" y="215.3" width="3.7" height="5.5" fill="#0ecb81"/>
<line x1="761.90" y1="205.7" x2="761.90" y2="217.0" stroke="#0ecb81" stroke-width="0.9"/>
<rect x="760.05" y="208.3" width="3.7" height="7.0" fill="#0ecb81"/>
<line x1="766.70" y1="204.7" x2="766.70" y2="217.8" stroke="#f6465d" stroke-width="0.9"/>
<rect x="764.85" y="208.3" width="3.7" height="8.1" fill="#f6465d"/>
<line x1="771.50" y1="211.0" x2="771.50" y2="221.4" stroke="#0ecb81" stroke-width="0.9"/>
<rect x="769.65" y="213.3" width="3.7" height="3.0" fill="#0ecb81"/>
<line x1="776.30" y1="208.9" x2="776.30" y2="216.4" stroke="#0ecb81" stroke-width="0.9"/>
<rect x="774.45" y="213.2" width="3.7" height="0.8" fill="#0ecb81"/>
<line x1="781.10" y1="210.8" x2="781.10" y2="214.9" stroke="#f6465d" stroke-width="0.9"/>
<rect x="779.25" y="213.2" width="3.7" height="0.8" fill="#f6465d"/>
<rect x="44.65" y="338.1" width="4.1" height="41.6" fill="#8f3545"/>
<rect x="49.45" y="334.4" width="4.1" height="45.3" fill="#8f3545"/>
<rect x="54.25" y="336.6" width="4.1" height="43.1" fill="#15795a"/>
<rect x="59.05" y="337.3" width="4.1" height="42.4" fill="#15795a"/>
<rect x="63.85" y="334.2" width="4.1" height="45.5" fill="#15795a"/>
<rect x="68.65" y="342.3" width="4.1" height="37.4" fill="#8f3545"/>
<rect x="73.45" y="349.9" width="4.1" height="29.8" fill="#15795a"/>
<rect x="78.25" y="337.9" width="4.1" height="41.8" fill="#15795a"/>
<rect x="83.05" y="338.8" width="4.1" height="40.9" fill="#8f3545"/>
<rect x="87.85" y="344.0" width="4.1" height="35.7" fill="#15795a"/>
<rect x="92.65" y="340.1" width="4.1" height="39.6" fill="#8f3545"/>
<rect x="97.45" y="346.0" width="4.1" height="33.7" fill="#15795a"/>
<rect x="102.25" y="357.9" width="4.1" height="21.8" fill="#8f3545"/>
<rect x="107.05" y="353.2" width="4.1" height="26.5" fill="#8f3545"/>
<rect x="111.85" y="347.5" width="4.1" height="32.2" fill="#8f3545"/>
<rect x="116.65" y="341.0" width="4.1" height="38.7" fill="#15795a"/>
<rect x="121.45" y="340.3" width="4.1" height="39.4" fill="#15795a"/>
<rect x="126.25" y="336.6" width="4.1" height="43.1" fill="#15795a"/>
<rect x="131.05" y="332.9" width="4.1" height="46.8" fill="#15795a"/>
<rect x="135.85" y="352.0" width="4.1" height="27.7" fill="#8f3545"/>
<rect x="140.65" y="347.5" width="4.1" height="32.2" fill="#15795a"/>
<rect x="145.45" y="340.1" width="4.1" height="39.6" fill="#15795a"/>
<rect x="150.25" y="282.4" width="4.1" height="97.3" fill="#8f3545"/>
<rect x="155.05" y="327.9" width="4.1" height="51.8" fill="#8f3545"/>
<rect x="159.85" y="339.4" width="4.1" height="40.3" fill="#15795a"/>
<rect x="164.65" y="340.3" width="4.1" height="39.4" fill="#8f3545"/>
<rect x="169.45" y="354.9" width="4.1" height="24.8" fill="#15795a"/>
<rect x="174.25" y="354.2" width="4.1" height="25.5" fill="#15795a"/>
<rect x="179.05" y="327.9" width="4.1" height="51.8" fill="#8f3545"/>
<rect x="183.85" y="344.0" width="4.1" height="35.7" fill="#15795a"/>
<rect x="188.65" y="345.3" width="4.1" height="34.4" fill="#15795a"/>
<rect x="193.45" y="347.0" width="4.1" height="32.7" fill="#8f3545"/>
<rect x="198.25" y="352.0" width="4.1" height="27.7" fill="#8f3545"/>
<rect x="203.05" y="354.9" width="4.1" height="24.8" fill="#15795a"/>
<rect x="207.85" y="355.8" width="4.1" height="23.9" fill="#8f3545"/>
<rect x="212.65" y="317.4" width="4.1" height="62.3" fill="#8f3545"/>
<rect x="217.45" y="312.4" width="4.1" height="67.3" fill="#8f3545"/>
<rect x="222.25" y="332.9" width="4.1" height="46.8" fill="#15795a"/>
<rect x="227.05" y="341.0" width="4.1" height="38.7" fill="#15795a"/>
<rect x="231.85" y="313.1" width="4.1" height="66.6" fill="#8f3545"/>
<rect x="236.65" y="352.9" width="4.1" height="26.8" fill="#8f3545"/>
<rect x="241.45" y="340.3" width="4.1" height="39.4" fill="#15795a"/>
<rect x="246.25" y="347.7" width="4.1" height="32.0" fill="#8f3545"/>
<rect x="251.05" y="345.5" width="4.1" height="34.2" fill="#8f3545"/>
<rect x="255.85" y="352.9" width="4.1" height="26.8" fill="#15795a"/>
<rect x="260.65" y="342.3" width="4.1" height="37.4" fill="#15795a"/>
<rect x="265.45" y="327.2" width="4.1" height="52.5" fill="#15795a"/>
<rect x="270.25" y="355.1" width="4.1" height="24.6" fill="#8f3545"/>
<rect x="275.05" y="355.1" width="4.1" height="24.6" fill="#15795a"/>
<rect x="279.85" y="342.3" width="4.1" height="37.4" fill="#15795a"/>
<rect x="284.65" y="338.1" width="4.1" height="41.6" fill="#15795a"/>
<rect x="289.45" y="316.3" width="4.1" height="63.4" fill="#15795a"/>
<rect x="294.25" y="336.0" width="4.1" height="43.7" fill="#8f3545"/>
<rect x="299.05" y="343.1" width="4.1" height="36.6" fill="#15795a"/>
<rect x="303.85" y="336.0" width="4.1" height="43.7" fill="#15795a"/>
<rect x="308.65" y="309.0" width="4.1" height="70.7" fill="#8f3545"/>
<rect x="313.45" y="337.3" width="4.1" height="42.4" fill="#15795a"/>
<rect x="318.25" y="337.3" width="4.1" height="42.4" fill="#8f3545"/>
<rect x="323.05" y="335.1" width="4.1" height="44.6" fill="#15795a"/>
<rect x="327.85" y="345.3" width="4.1" height="34.4" fill="#8f3545"/>
<rect x="332.65" y="314.6" width="4.1" height="65.1" fill="#15795a"/>
<rect x="337.45" y="351.2" width="4.1" height="28.5" fill="#8f3545"/>
<rect x="342.25" y="348.3" width="4.1" height="31.4" fill="#15795a"/>
<rect x="347.05" y="338.1" width="4.1" height="41.6" fill="#15795a"/>
<rect x="351.85" y="337.2" width="4.1" height="42.5" fill="#15795a"/>
<rect x="356.65" y="339.0" width="4.1" height="40.7" fill="#15795a"/>
<rect x="361.45" y="325.7" width="4.1" height="54.0" fill="#8f3545"/>
<rect x="366.25" y="338.1" width="4.1" height="41.6" fill="#8f3545"/>
<rect x="371.05" y="357.1" width="4.1" height="22.6" fill="#15795a"/>
<rect x="375.85" y="355.1" width="4.1" height="24.6" fill="#8f3545"/>
<rect x="380.65" y="349.9" width="4.1" height="29.8" fill="#15795a"/>
<rect x="385.45" y="347.5" width="4.1" height="32.2" fill="#8f3545"/>
<rect x="390.25" y="330.1" width="4.1" height="49.6" fill="#8f3545"/>
<rect x="395.05" y="331.4" width="4.1" height="48.3" fill="#15795a"/>
<rect x="399.85" y="344.7" width="4.1" height="35.0" fill="#15795a"/>
<rect x="404.65" y="354.2" width="4.1" height="25.5" fill="#8f3545"/>
<rect x="409.45" y="348.3" width="4.1" height="31.4" fill="#8f3545"/>
<rect x="414.25" y="344.0" width="4.1" height="35.7" fill="#8f3545"/>
<rect x="419.05" y="342.3" width="4.1" height="37.4" fill="#15795a"/>
<rect x="423.85" y="345.3" width="4.1" height="34.4" fill="#8f3545"/>
<rect x="428.65" y="350.5" width="4.1" height="29.2" fill="#8f3545"/>
<rect x="433.45" y="354.2" width="4.1" height="25.5" fill="#8f3545"/>
<rect x="438.25" y="359.2" width="4.1" height="20.5" fill="#15795a"/>
<rect x="443.05" y="359.2" width="4.1" height="20.5" fill="#15795a"/>
<rect x="447.85" y="336.6" width="4.1" height="43.1" fill="#15795a"/>
<rect x="452.65" y="344.0" width="4.1" height="35.7" fill="#8f3545"/>
<rect x="457.45" y="327.9" width="4.1" height="51.8" fill="#8f3545"/>
<rect x="462.25" y="349.9" width="4.1" height="29.8" fill="#8f3545"/>
<rect x="467.05" y="344.0" width="4.1" height="35.7" fill="#8f3545"/>
<rect x="471.85" y="361.8" width="4.1" height="17.9" fill="#15795a"/>
<rect x="476.65" y="358.6" width="4.1" height="21.1" fill="#15795a"/>
<rect x="481.45" y="349.0" width="4.1" height="30.7" fill="#8f3545"/>
<rect x="486.25" y="318.1" width="4.1" height="61.6" fill="#8f3545"/>
<rect x="491.05" y="342.3" width="4.1" height="37.4" fill="#15795a"/>
<rect x="495.85" y="330.1" width="4.1" height="49.6" fill="#8f3545"/>
<rect x="500.65" y="339.4" width="4.1" height="40.3" fill="#15795a"/>
<rect x="505.45" y="352.9" width="4.1" height="26.8" fill="#15795a"/>
<rect x="510.25" y="354.2" width="4.1" height="25.5" fill="#8f3545"/>
<rect x="515.05" y="338.8" width="4.1" height="40.9" fill="#8f3545"/>
<rect x="519.85" y="340.3" width="4.1" height="39.4" fill="#15795a"/>
<rect x="524.65" y="348.3" width="4.1" height="31.4" fill="#8f3545"/>
<rect x="529.45" y="346.0" width="4.1" height="33.7" fill="#15795a"/>
<rect x="534.25" y="327.2" width="4.1" height="52.5" fill="#8f3545"/>
<rect x="539.05" y="355.8" width="4.1" height="23.9" fill="#15795a"/>
<rect x="543.85" y="350.5" width="4.1" height="29.2" fill="#15795a"/>
<rect x="548.65" y="347.5" width="4.1" height="32.2" fill="#15795a"/>
<rect x="553.45" y="340.3" width="4.1" height="39.4" fill="#8f3545"/>
<rect x="558.25" y="344.0" width="4.1" height="35.7" fill="#15795a"/>
<rect x="563.05" y="349.9" width="4.1" height="29.8" fill="#8f3545"/>
<rect x="567.85" y="332.9" width="4.1" height="46.8" fill="#8f3545"/>
<rect x="572.65" y="290.0" width="4.1" height="89.7" fill="#8f3545"/>
<rect x="577.45" y="343.1" width="4.1" height="36.6" fill="#15795a"/>
<rect x="582.25" y="332.9" width="4.1" height="46.8" fill="#15795a"/>
<rect x="587.05" y="349.0" width="4.1" height="30.7" fill="#15795a"/>
<rect x="591.85" y="349.0" width="4.1" height="30.7" fill="#8f3545"/>
<rect x="596.65" y="349.9" width="4.1" height="29.8" fill="#8f3545"/>
<rect x="601.45" y="344.7" width="4.1" height="35.0" fill="#8f3545"/>
<rect x="606.25" y="356.4" width="4.1" height="23.3" fill="#15795a"/>
<rect x="611.05" y="358.6" width="4.1" height="21.1" fill="#15795a"/>
<rect x="615.85" y="338.8" width="4.1" height="40.9" fill="#8f3545"/>
<rect x="620.65" y="347.5" width="4.1" height="32.2" fill="#15795a"/>
<rect x="625.45" y="338.8" width="4.1" height="40.9" fill="#15795a"/>
<rect x="630.25" y="354.2" width="4.1" height="25.5" fill="#8f3545"/>
<rect x="635.05" y="345.3" width="4.1" height="34.4" fill="#8f3545"/>
<rect x="639.85" y="359.2" width="4.1" height="20.5" fill="#15795a"/>
<rect x="644.65" y="356.4" width="4.1" height="23.3" fill="#8f3545"/>
<rect x="649.45" y="351.2" width="4.1" height="28.5" fill="#15795a"/>
<rect x="654.25" y="349.9" width="4.1" height="29.8" fill="#15795a"/>
<rect x="659.05" y="357.9" width="4.1" height="21.8" fill="#8f3545"/>
<rect x="663.85" y="351.2" width="4.1" height="28.5" fill="#15795a"/>
<rect x="668.65" y="354.2" width="4.1" height="25.5" fill="#8f3545"/>
<rect x="673.45" y="363.8" width="4.1" height="15.9" fill="#8f3545"/>
<rect x="678.25" y="361.6" width="4.1" height="18.1" fill="#15795a"/>
<rect x="683.05" y="356.4" width="4.1" height="23.3" fill="#8f3545"/>
<rect x="687.85" y="343.1" width="4.1" height="36.6" fill="#8f3545"/>
<rect x="692.65" y="348.3" width="4.1" height="31.4" fill="#8f3545"/>
<rect x="697.45" y="354.9" width="4.1" height="24.8" fill="#15795a"/>
<rect x="702.25" y="352.1" width="4.1" height="27.6" fill="#8f3545"/>
<rect x="707.05" y="363.8" width="4.1" height="15.9" fill="#15795a"/>
<rect x="711.85" y="364.5" width="4.1" height="15.2" fill="#8f3545"/>
<rect x="716.65" y="357.1" width="4.1" height="22.6" fill="#8f3545"/>
<rect x="721.45" y="351.2" width="4.1" height="28.5" fill="#8f3545"/>
<rect x="726.25" y="338.8" width="4.1" height="40.9" fill="#8f3545"/>
<rect x="731.05" y="348.3" width="4.1" height="31.4" fill="#8f3545"/>
<rect x="735.85" y="336.0" width="4.1" height="43.7" fill="#8f3545"/>
<rect x="740.65" y="353.4" width="4.1" height="26.3" fill="#15795a"/>
<rect x="745.45" y="361.6" width="4.1" height="18.1" fill="#15795a"/>
<rect x="750.25" y="339.6" width="4.1" height="40.1" fill="#8f3545"/>
<rect x="755.05" y="349.9" width="4.1" height="29.8" fill="#15795a"/>
<rect x="759.85" y="352.9" width="4.1" height="26.8" fill="#15795a"/>
<rect x="764.65" y="352.0" width="4.1" height="27.7" fill="#8f3545"/>
<rect x="769.45" y="353.4" width="4.1" height="26.3" fill="#15795a"/>
<rect x="774.25" y="361.6" width="4.1" height="18.1" fill="#15795a"/>
<rect x="779.05" y="370.1" width="4.1" height="9.6" fill="#8f3545"/>
<polyline points="47.1,428.1 52.2,432.2 57.0,435.3 61.5,436.4 66.7,433.7 71.4,431.2 76.0,429.4 81.1,426.5 86.3,428.7 90.8,432.2 95.6,437.8 100.7,443.2 105.9,448.3 110.6,454.5 115.2,462.2 120.3,470.0 125.5,475.2 130.7,477.0 137.9,477.7 143.0,475.0 148.2,471.1 152.3,472.1 157.5,473.7 162.6,474.8 167.8,473.9 173.0,473.1 178.1,473.7 182.3,472.1 186.4,471.5 191.5,473.9 196.7,477.0 200.8,479.1 206.0,483.2 210.1,486.7 214.2,483.4 219.4,476.2 224.6,470.0 229.7,466.3 234.9,461.1 240.0,456.4 245.0,454.7 249.1,454.1 254.3,451.9 258.4,450.4 263.6,452.9 267.7,460.1 272.9,468.4 278.0,473.5 282.8,476.8 286.9,476.8 291.4,473.5 296.6,469.4 301.8,464.7 306.9,460.1 312.1,454.5 316.2,449.4 320.3,446.1 325.5,442.2 329.6,439.1 333.8,433.3 337.9,426.7 341.0,423.0 345.1,420.3 350.3,415.7 355.4,409.5 359.6,404.4 363.7,402.3 368.8,405.0 374.0,408.9 378.1,411.6 383.3,412.4 387.4,414.7 392.6,420.5 397.7,425.4 402.9,429.4 408.1,433.3 412.2,437.8 416.3,443.0 421.5,445.7 426.6,449.0 431.8,451.9 435.9,454.3 440.0,457.6 445.0,458.7 450.2,453.3 454.9,448.1 459.4,450.8 464.6,453.9 469.4,461.1 474.1,467.3 479.1,471.5 483.8,474.6 488.8,478.7 493.5,482.2 498.3,483.0 502.8,482.6 508.0,485.5 512.7,488.4 517.2,487.6 522.4,485.9 527.1,484.7 531.7,487.1 536.8,484.7 541.0,482.8 545.7,485.3 550.7,490.2 555.4,493.5 560.6,496.9 565.3,498.5 569.9,494.8 574.6,484.9 579.6,475.2 584.3,468.8 589.1,464.2 594.0,459.1 598.8,453.3 603.5,447.7 608.1,442.8 613.2,440.7 618.0,436.6 622.5,432.9 627.7,430.6 632.4,428.9 637.0,425.6 642.1,422.3 645.0,421.9 648.1,421.3 651.8,420.1 656.4,423.0 661.5,426.7 665.6,433.3 670.8,441.1 675.5,447.3 680.5,452.3 685.2,458.3 690.0,459.3 694.5,458.7 699.7,457.6 704.4,458.7 709.4,459.5 714.1,460.1 718.9,459.5 723.4,458.5 728.2,453.9 733.1,449.2 737.9,442.6 742.6,436.4 747.6,432.5 752.3,427.5 757.1,425.2 762.0,427.1 766.8,429.2 771.5,430.4 776.5,432.7 781.2,434.5" fill="none" stroke="#8f1519" stroke-width="1.2" stroke-linejoin="round"/>
</g>
<g stroke="#3a3e47" stroke-width="1" shape-rendering="crispEdges">
<line x1="45" y1="270.5" x2="949" y2="270.5"/>
<line x1="45" y1="389.5" x2="949" y2="389.5"/>
<line x1="45" y1="508.5" x2="1000" y2="508.5"/>
<line x1="949.5" y1="32" x2="949.5" y2="531"/>
<line x1="949" y1="255.5" x2="953" y2="255.5"/>
<line x1="949" y1="231.5" x2="953" y2="231.5"/>
<line x1="949" y1="207.5" x2="953" y2="207.5"/>
<line x1="949" y1="183.5" x2="953" y2="183.5"/>
<line x1="949" y1="159.5" x2="953" y2="159.5"/>
<line x1="949" y1="135.5" x2="953" y2="135.5"/>
<line x1="949" y1="111.5" x2="953" y2="111.5"/>
<line x1="949" y1="87.5" x2="953" y2="87.5"/>
<line x1="949" y1="63.5" x2="953" y2="63.5"/>
<line x1="949" y1="39.5" x2="953" y2="39.5"/>
<line x1="949" y1="379.5" x2="953" y2="379.5"/>
<line x1="949" y1="348.5" x2="953" y2="348.5"/>
<line x1="949" y1="316.5" x2="953" y2="316.5"/>
<line x1="949" y1="284.5" x2="953" y2="284.5"/>
<line x1="949" y1="500.5" x2="953" y2="500.5"/>
<line x1="949" y1="459.5" x2="953" y2="459.5"/>
<line x1="949" y1="417.5" x2="953" y2="417.5"/>
<line x1="123.5" y1="508" x2="123.5" y2="512"/>
<line x1="190.5" y1="508" x2="190.5" y2="512"/>
<line x1="267.5" y1="508" x2="267.5" y2="512"/>
<line x1="349.5" y1="508" x2="349.5" y2="512"/>
<line x1="416.5" y1="508" x2="416.5" y2="512"/>
<line x1="560.5" y1="508" x2="560.5" y2="512"/>
<line x1="627.5" y1="508" x2="627.5" y2="512"/>
<line x1="709.5" y1="508" x2="709.5" y2="512"/>
<line x1="776.5" y1="508" x2="776.5" y2="512"/>
<line x1="857.5" y1="508" x2="857.5" y2="512"/>
<line x1="925.5" y1="508" x2="925.5" y2="512"/>
</g>
<line x1="474" y1="32" x2="474" y2="508" stroke="#b5b9c0" stroke-width="0.9" stroke-dasharray="4 4.05" stroke-dashoffset="4"/>
<line x1="45" y1="302.5" x2="949" y2="302.5" stroke="#a0a4ab" stroke-width="1" stroke-dasharray="4.3 3.75" stroke-dashoffset="1"/>
<text x="956.3" y="258.9" font-size="9.2" fill="#a3a8b1" textLength="36.8" lengthAdjust="spacingAndGlyphs" >36000.00</text>
<text x="956.3" y="234.8" font-size="9.2" fill="#a3a8b1" textLength="36.8" lengthAdjust="spacingAndGlyphs" >40000.00</text>
<text x="956.3" y="210.8" font-size="9.2" fill="#a3a8b1" textLength="36.8" lengthAdjust="spacingAndGlyphs" >44000.00</text>
<text x="956.3" y="186.7" font-size="9.2" fill="#a3a8b1" textLength="36.8" lengthAdjust="spacingAndGlyphs" >48000.00</text>
<text x="956.3" y="162.7" font-size="9.2" fill="#a3a8b1" textLength="36.8" lengthAdjust="spacingAndGlyphs" >52000.00</text>
<text x="956.3" y="138.7" font-size="9.2" fill="#a3a8b1" textLength="36.8" lengthAdjust="spacingAndGlyphs" >56000.00</text>
<text x="956.3" y="114.6" font-size="9.2" fill="#a3a8b1" textLength="36.8" lengthAdjust="spacingAndGlyphs" >60000.00</text>
<text x="956.3" y="90.6" font-size="9.2" fill="#a3a8b1" textLength="36.8" lengthAdjust="spacingAndGlyphs" >64000.00</text>
<text x="956.3" y="66.5" font-size="9.2" fill="#a3a8b1" textLength="36.8" lengthAdjust="spacingAndGlyphs" >68000.00</text>
<text x="956.3" y="42.5" font-size="9.2" fill="#a3a8b1" textLength="36.8" lengthAdjust="spacingAndGlyphs" >72000.00</text>
<text x="956.5" y="382.8" font-size="9.2" fill="#a3a8b1" textLength="4.8" lengthAdjust="spacingAndGlyphs" >0</text>
<text x="956.5" y="351.2" font-size="9.2" fill="#a3a8b1" textLength="14.7" lengthAdjust="spacingAndGlyphs" >40K</text>
<text x="956.5" y="319.6" font-size="9.2" fill="#a3a8b1" textLength="14.7" lengthAdjust="spacingAndGlyphs" >80K</text>
<text x="956.5" y="288.0" font-size="9.2" fill="#a3a8b1" textLength="19.4" lengthAdjust="spacingAndGlyphs" >120K</text>
<text x="956.3" y="504.0" font-size="9.2" fill="#a3a8b1" textLength="32.2" lengthAdjust="spacingAndGlyphs" >20.0000</text>
<text x="956.3" y="462.4" font-size="9.2" fill="#a3a8b1" textLength="32.2" lengthAdjust="spacingAndGlyphs" >30.0000</text>
<text x="956.3" y="420.7" font-size="9.2" fill="#a3a8b1" textLength="32.2" lengthAdjust="spacingAndGlyphs" >40.0000</text>
<text x="46.7" y="524.8" font-size="9.2" fill="#8f959f" text-anchor="middle" textLength="9" lengthAdjust="spacingAndGlyphs">16</text>
<rect x="30" y="512" width="14.6" height="18" fill="#161a1e"/>
<text x="115.8" y="524.8" font-size="9.2" fill="#8f959f" textLength="15.5" lengthAdjust="spacingAndGlyphs">Sep</text>
<text x="186.4" y="524.8" font-size="9.2" fill="#8f959f" textLength="8.6" lengthAdjust="spacingAndGlyphs">15</text>
<text x="259.5" y="524.8" font-size="9.2" fill="#8f959f" textLength="16" lengthAdjust="spacingAndGlyphs">Oct</text>
<text x="344.6" y="524.8" font-size="9.2" fill="#8f959f" textLength="9" lengthAdjust="spacingAndGlyphs">18</text>
<text x="408.0" y="524.8" font-size="9.2" fill="#8f959f" textLength="16.5" lengthAdjust="spacingAndGlyphs">Nov</text>
<text x="552.3" y="524.8" font-size="9.2" fill="#8f959f" textLength="16" lengthAdjust="spacingAndGlyphs">Dec</text>
<text x="623.2" y="524.8" font-size="9.2" fill="#8f959f" textLength="8.6" lengthAdjust="spacingAndGlyphs">15</text>
<text x="698.4" y="524.8" font-size="9.2" fill="#c3c7ce" stroke="#c3c7ce" stroke-width="0.25" textLength="21.5" lengthAdjust="spacingAndGlyphs">2022</text>
<text x="772.0" y="524.8" font-size="9.2" fill="#8f959f" textLength="8.6" lengthAdjust="spacingAndGlyphs">15</text>
<text x="850.1" y="524.8" font-size="9.2" fill="#8f959f" textLength="15.5" lengthAdjust="spacingAndGlyphs">Feb</text>
<text x="920.8" y="524.8" font-size="9.2" fill="#8f959f" textLength="8.6" lengthAdjust="spacingAndGlyphs">15</text>
<rect x="949" y="207" width="49.6" height="14" fill="#f6465d"/>
<line x1="949" y1="214" x2="953" y2="214" stroke="#fff" stroke-width="1" opacity=".7"/>
<text x="955.4" y="217.2" font-size="9.2" fill="#fff" textLength="37" lengthAdjust="spacingAndGlyphs" >42974.03</text>
<rect x="949.3" y="295.6" width="45.3" height="13.7" fill="#4c5262"/>
<text x="955.6" y="305.8" font-size="9.2" fill="#fff" textLength="33" lengthAdjust="spacingAndGlyphs" >98.443K</text>
<rect x="447" y="509" width="52" height="21" fill="#4c5262"/>
<text x="473.5" y="524.5" font-size="9.2" fill="#fff" text-anchor="middle" textLength="43" lengthAdjust="spacingAndGlyphs">13 Nov '21</text>
<text x="52.3" y="49.6" font-size="10.8" fill="#a2a8b2" textLength="129.2" lengthAdjust="spacingAndGlyphs" stroke="#a2a8b2" stroke-width="0.2">BTCUSDT · 1D · Binance</text>
<text x="188.5" y="50.9" font-size="9.3" fill="#848e9c" textLength="6.2" lengthAdjust="spacingAndGlyphs" >O</text>
<text x="195.75" y="50.9" font-size="9.3" fill="#0ecb81" textLength="38.6" lengthAdjust="spacingAndGlyphs" stroke="#0ecb81" stroke-width="0.15">64122.22</text>
<text x="240.3" y="50.9" font-size="9.3" fill="#848e9c" textLength="6" lengthAdjust="spacingAndGlyphs" >H</text>
<text x="247.5" y="50.9" font-size="9.3" fill="#0ecb81" textLength="39.3" lengthAdjust="spacingAndGlyphs" stroke="#0ecb81" stroke-width="0.15">65000.00</text>
<text x="292.8" y="50.9" font-size="9.3" fill="#848e9c" textLength="4.7" lengthAdjust="spacingAndGlyphs" >L</text>
<text x="298.5" y="50.9" font-size="9.3" fill="#0ecb81" textLength="38.8" lengthAdjust="spacingAndGlyphs" stroke="#0ecb81" stroke-width="0.15">63360.22</text>
<text x="342" y="50.9" font-size="9.3" fill="#848e9c" textLength="5.5" lengthAdjust="spacingAndGlyphs" >C</text>
<text x="348.7" y="50.9" font-size="9.3" fill="#0ecb81" textLength="38.6" lengthAdjust="spacingAndGlyphs" stroke="#0ecb81" stroke-width="0.15">64380.00</text>
<text x="393.7" y="50.9" font-size="9.3" fill="#0ecb81" textLength="33.3" lengthAdjust="spacingAndGlyphs" stroke="#0ecb81" stroke-width="0.15">+257.77</text>
<text x="430.75" y="50.9" font-size="9.3" fill="#0ecb81" textLength="36.4" lengthAdjust="spacingAndGlyphs" stroke="#0ecb81" stroke-width="0.15">(+0.40%)</text>
<text x="52.3" y="68.9" font-size="9.3" fill="#aeb4bc" textLength="32" lengthAdjust="spacingAndGlyphs" >BB 20 2</text>
<text x="91.6" y="68.9" font-size="9.3" fill="#e81414" textLength="49.6" lengthAdjust="spacingAndGlyphs" stroke="#e81414" stroke-width="0.15">62727.2970</text>
<text x="145.4" y="68.9" font-size="9.3" fill="#e6e8ec" textLength="49.7" lengthAdjust="spacingAndGlyphs" >67129.7160</text>
<text x="200.8" y="68.9" font-size="9.3" fill="#e6e8ec" textLength="48.9" lengthAdjust="spacingAndGlyphs" >58324.8780</text>
<text x="52.5" y="286.75" font-size="9.3" fill="#aeb4bc" textLength="32.2" lengthAdjust="spacingAndGlyphs" >Volume</text>
<text x="92" y="286.75" font-size="9.3" fill="#0ecb81" textLength="34.75" lengthAdjust="spacingAndGlyphs" stroke="#0ecb81" stroke-width="0.15">22.505K</text>
<text x="52.5" y="406" font-size="9.3" fill="#aeb4bc" textLength="45" lengthAdjust="spacingAndGlyphs" >ADX 14 14</text>
<text x="104" y="406" font-size="9.3" fill="#e81414" textLength="32.5" lengthAdjust="spacingAndGlyphs" stroke="#e81414" stroke-width="0.15">28.2181</text>
<rect x="869" y="275.5" width="16" height="16" rx="3.2" fill="#161a1e" stroke="#30343c" stroke-width="1"/>
<path d="M877 287.3V280.1M873.6 283.3L877 279.9L880.4 283.3" stroke="#c3c6cd" stroke-width="0.95" fill="none" stroke-linecap="round" stroke-linejoin="round"/>
<rect x="889" y="275.5" width="16" height="16" rx="3.2" fill="#161a1e" stroke="#30343c" stroke-width="1"/>
<path d="M897 279.7V286.9M893.6 283.7L897 287.1L900.4 283.7" stroke="#c3c6cd" stroke-width="0.95" fill="none" stroke-linecap="round" stroke-linejoin="round"/>
<rect x="909" y="275.5" width="16" height="16" rx="3.2" fill="#161a1e" stroke="#30343c" stroke-width="1"/>
<path d="M913.5 280.0L920.5 287.0M920.5 280.0L913.5 287.0" stroke="#c3c6cd" stroke-width="0.95" fill="none" stroke-linecap="round" stroke-linejoin="round"/>
<rect x="928.5" y="275.5" width="16" height="16" rx="3.2" fill="#161a1e" stroke="#30343c" stroke-width="1"/>
<path d="M932.3 281.9V280.9a1.7 1.7 0 0 1 1.7 -1.7H939.0a1.7 1.7 0 0 1 1.7 1.7V281.9M932.3 285.1V286.1a1.7 1.7 0 0 0 1.7 1.7H939.0a1.7 1.7 0 0 0 1.7 -1.7V285.1" stroke="#c3c6cd" stroke-width="1.2" fill="none"/>
<g stroke="#23272d" stroke-width="1" shape-rendering="crispEdges"><line x1="0" y1="31.5" x2="1000" y2="31.5"/><line x1="135.5" y1="0" x2="135.5" y2="31"/></g>
<text x="16.5" y="14.5" font-size="15.2" font-weight="bold" fill="#eaecef" textLength="75.5" lengthAdjust="spacingAndGlyphs">BTC/USDT</text>
<path d="M105.8 7h5.8l-2.9 3.4z" fill="#9aa0ab"/>
<path d="M19.3 24.6l4-1.7v8.4l-4-1.6z" fill="#6f7785"/><path d="M23.6 24.4h2v5.8h-2" fill="none" stroke="#6f7785" stroke-width="0.9"/><path d="M21.2 25.6v3.6" stroke="#161a1e" stroke-width=".8"/>
<text x="32.5" y="30.5" font-size="9.3" fill="#848e9c" textLength="28.8" lengthAdjust="spacingAndGlyphs">Bitcoin</text>
<rect x="0" y="31" width="135" height="1" fill="#23272d"/>
<text x="159" y="18.9" font-size="9.3" fill="#848e9c" textLength="21" lengthAdjust="spacingAndGlyphs">Time</text>
<text x="193.6" y="18.9" font-size="9.3" fill="#848e9c" textLength="17.4" lengthAdjust="spacingAndGlyphs">15m</text>
<text x="225" y="18.9" font-size="9.3" fill="#848e9c" textLength="11" lengthAdjust="spacingAndGlyphs">1H</text>
<text x="249.4" y="18.9" font-size="9.3" fill="#848e9c" textLength="11.6" lengthAdjust="spacingAndGlyphs">4H</text>
<text x="274.4" y="18.9" font-size="9.3" fill="#e6b012" textLength="11.2" lengthAdjust="spacingAndGlyphs">1D</text>
<text x="298.6" y="18.9" font-size="9.3" fill="#848e9c" textLength="13" lengthAdjust="spacingAndGlyphs">1W</text>
<path d="M330.2 13.8h6.4l-3.2 3.6z" fill="#9aa0ab"/>
<g stroke="#8d94a0" stroke-width="1.6" fill="#8d94a0" stroke-linecap="round"><line x1="353.5" y1="12.4" x2="364.2" y2="12.4"/><line x1="353.5" y1="18.2" x2="364.2" y2="18.2"/><circle cx="356.9" cy="12.4" r="2.3" stroke="none"/><circle cx="361" cy="18.2" r="2.3" stroke="none"/></g>
<path d="M382.3 10h9.4v11l-2.3-2-2.4 2-2.4-2-2.3 2z M384.3 12v2h1.6v-2z M388.1 12v2h1.6v-2z M384.3 15.6v2h1.6v-2z M388.1 15.6v2h1.6v-2z" fill="#8d94a0" fill-rule="evenodd"/>
<g stroke="#8d94a0" fill="none" stroke-width="1.3"><rect x="410.2" y="14" width="3.7" height="5.4" rx=".6"/><line x1="412" y1="11.4" x2="412" y2="14"/><line x1="412" y1="19.4" x2="412" y2="22.3"/><rect x="417.2" y="10.4" width="3.7" height="8.6" rx=".6"/><line x1="419" y1="8.2" x2="419" y2="10.4"/><line x1="419" y1="19" x2="419" y2="22.3"/></g>
<path d="M438 12.6h2.3l1.2-1.6h5l1.2 1.6h2.3v7.6h-12z M444 14a2.3 2.3 0 1 0 0.001 0z" fill="#8d94a0" fill-rule="evenodd"/>
<circle cx="473.7" cy="15.5" r="6.1" fill="#8d94a0"/><path d="M473.7 11.9v7.2M470.1 15.5h7.2" stroke="#161a1e" stroke-width="1.7"/>
<g font-size="10.3" fill="#848e9c"><text x="808.7" y="19">Original</text><text x="858.2" y="19" fill="#e6b012">TradingView</text><text x="928.2" y="19">Depth</text></g>
<g stroke="#5e6673" stroke-width="1.2" fill="#5e6673" stroke-linejoin="round"><path d="M985.4 9.4l-3.4 3.4" fill="none"/><path d="M980.4 10.6v3.6h3.6z"/><path d="M973.4 20.8l3.4-3.4" fill="none"/><path d="M978.4 19.6v-3.6h-3.6z"/></g>
<g stroke="#264f94" stroke-width="1.2" fill="none"><path d="M12 50.6h6M24 50.6h6M21 42v5.4M21 54v5.4"/></g>
<g stroke="#878d99" stroke-width="1" fill="none" stroke-linecap="round" stroke-linejoin="round"><circle cx="27.4" cy="72.3" r="1.7"/><circle cx="13.7" cy="85.8" r="1.7"/><path d="M26.2 73.5L14.9 84.6"/></g>
<g stroke="#878d99" stroke-width="1" fill="none" stroke-linecap="round" stroke-linejoin="round"><circle cx="13.7" cy="106" r="1.6"/><circle cx="13.7" cy="115.2" r="1.6"/><circle cx="23.1" cy="115.2" r="1.6"/><path d="M14.9 104.8L20.4 99.7M14.9 107.2L22 114M14.9 114L25.3 104.2M24.3 114L29.5 108.6"/></g>
<g stroke="#878d99" stroke-width="1" fill="none" stroke-linecap="round" stroke-linejoin="round"><path d="M11.4 143.4l5.3-7c1.4-1.3 2.6-1.6 3.9-1.5c1.8 0.4 2.8 1.6 2.7 3.3c-0.1 2.2-1 4.2-2.5 5.2z"/><path d="M23.3 132.1c-0.2 1.8 0.3 3 1.5 3.3c0.7 0.1 1.3 0 1.8-0.4l4.8-3.8"/></g>
<g stroke="#878d99" stroke-width="1" fill="none" stroke-linecap="round" stroke-linejoin="round" stroke-width=".9"><path d="M15.8 161.3v-2.6h10.6v2.6M21.1 158.7v14M18.6 172.7h5"/></g>
<g stroke="#878d99" stroke-width="1" fill="none" stroke-linecap="round" stroke-linejoin="round"><circle cx="15.7" cy="188" r="1.6"/><circle cx="25.9" cy="188.4" r="1.6"/><circle cx="18.9" cy="193.7" r="1.6"/><circle cx="13.5" cy="201.6" r="1.6"/><circle cx="28.5" cy="199.5" r="1.6"/><path d="M15.4 189.6L13.8 200M16.5 189.4L18.1 192.3M20.2 192.7L24.6 189.4M18 195L14.4 200.3M26.3 190L28.1 197.9M20.4 194.3L27 198.8"/></g>
<g stroke="#878d99" stroke-width="1" fill="none" stroke-linecap="round" stroke-linejoin="round"><circle cx="12.9" cy="216.6" r="1.6"/><circle cx="12.9" cy="225.1" r="1.6"/><circle cx="29.1" cy="225.1" r="1.6"/><circle cx="12.9" cy="230.7" r="1.6"/><path d="M14.5 216.6H29.5M14.5 225.1H27.5M14.5 230.7H29.5M21 218.5v10M19.5 220l1.5-1.6l1.5 1.6M19.5 227l1.5 1.6l1.5-1.6"/></g>
<g stroke="#878d99" stroke-width="1" fill="none" stroke-linecap="round" stroke-linejoin="round"><circle cx="21" cy="251.4" r="6.4"/><path d="M17.8 253.3c1.6 2.6 4.8 2.6 6.4 0"/><circle cx="18.8" cy="249.6" r=".6" fill="#878d99"/><circle cx="23.2" cy="249.6" r=".6" fill="#878d99"/></g>
<g stroke="#878d99" stroke-width="1" fill="none" stroke-linecap="round" stroke-linejoin="round" transform="translate(20.4 291.3) rotate(-37)"><rect x="-10" y="-3.4" width="20" height="6.8" rx=".8"/><path d="M-7 -3.4v2.4M-4.2 -3.4v2.4M-1.4 -3.4v2.4M1.4 -3.4v2.4M4.2 -3.4v2.4M7 -3.4v2.4"/></g>
<g stroke="#878d99" stroke-width="1" fill="none" stroke-linecap="round" stroke-linejoin="round"><circle cx="19.3" cy="318.4" r="6"/><path d="M23.7 322.8L26.9 326M16.5 318.4h5.6M19.3 315.6v5.6"/></g>
<g stroke="#878d99" stroke-width="1" fill="none" stroke-linecap="round" stroke-linejoin="round"><path d="M14 365.4v-8.3a6.4 6.4 0 0 1 12.8 0v8.3h-3.8v-8.3a2.6 2.6 0 0 0 -5.2 0v8.3z"/><path d="M14 362h3.8M23 362h3.8"/></g>
<g stroke="#878d99" stroke-width="1" fill="none" stroke-linecap="round" stroke-linejoin="round"><g transform="translate(17.8 385.5) rotate(-40)"><path d="M-7 0l2.5-2.2h10.5a1.2 1.2 0 0 1 1.2 1.2v2a1.2 1.2 0 0 1 -1.2 1.2h-10.5z"/><path d="M3.6 -2.2v4.4M-4.5 -2.2v4.4"/></g><rect x="22" y="390.2" width="6" height="4.6" rx=".6" fill="#161a1e"/><path d="M23.3 390.2v-1.5a1.8 1.8 0 0 1 3.5 -0.5"/></g>
<g stroke="#878d99" stroke-width="1" fill="none" stroke-linecap="round" stroke-linejoin="round"><rect x="14.6" y="414" width="12.3" height="10.7" rx="1.2"/><path d="M17.6 414v-2.6a3.2 3.2 0 0 1 6.2 -1"/><path d="M20.7 418.3v2"/></g>
<g stroke="#878d99" stroke-width="1" fill="none" stroke-linecap="round" stroke-linejoin="round"><path d="M12.5 445.2c4-7 13-7 17 0c-4 7-13 7-17 0z"/><circle cx="21" cy="445.2" r="1.9" fill="#878d99"/></g>
<g stroke="#878d99" stroke-width="1" fill="none" stroke-linecap="round" stroke-linejoin="round"><path d="M15 478.6h11M18 478.6v-1.2h5v1.2M15.7 478.6v12.2a1.4 1.4 0 0 0 1.4 1.4h6.8a1.4 1.4 0 0 0 1.4-1.4v-12.2M18.4 481.5v8M20.5 481.5v8M22.6 481.5v8"/></g>
<circle cx="63.5" cy="490.5" r="12.5" fill="#2d303e"/>
<g fill="#28a5f0"><circle cx="56.9" cy="491.6" r="2.4"/><circle cx="62" cy="488.3" r="3.4"/><circle cx="69.4" cy="492" r="3.2"/><path d="M56 495.2h13.6v-5l-2.6-3.2l-3 2.4l-7 1z"/><path d="M64 489.5l3.6-3.3l3 3z"/></g>
<path d="M54.4 493.4l7-5l4 5.1l3.9-4.7l1.5-.9" stroke="#2d303e" stroke-width="1.15" fill="none" stroke-linejoin="miter"/>
<path d="M41 501.8l-2 2.8l2 2.8" stroke="#878d99" stroke-width="1" fill="none" stroke-linecap="round" stroke-linejoin="round"/>
<text x="57.6" y="551" font-size="10" fill="#848e9c" textLength="56.5" lengthAdjust="spacingAndGlyphs">Date Range</text>
<path d="M119.5 545.5l2.5 2.5l2.5-2.5" stroke="#6f7683" stroke-width="1" fill="none" stroke-linecap="round" stroke-linejoin="round"/>
<text x="806.7" y="550.8" font-size="10.2" fill="#848e9c" textLength="87" lengthAdjust="spacingAndGlyphs">16:14:29 (UTC+3)</text>
<text x="920.8" y="551.3" font-size="11.5" fill="#848e9c" textLength="10.2" lengthAdjust="spacingAndGlyphs">%</text>
<text x="942.6" y="550.7" font-size="10.2" fill="#848e9c" textLength="14.7" lengthAdjust="spacingAndGlyphs">log</text>
<text x="968.8" y="550.7" font-size="10.2" fill="#2a6fdb" stroke="#2a6fdb" stroke-width=".2" textLength="22" lengthAdjust="spacingAndGlyphs">auto</text>
<g stroke="#9ba1aa" stroke-width=".9" fill="none"><circle cx="974.5" cy="520.6" r="3.7"/><path d="M974.5 514.7v2M974.5 524.5v2M968.6 520.6h2M978.4 520.6h2M970.3 516.4l1.4 1.4M977.3 523.4l1.4 1.4M970.3 524.8l1.4-1.4M977.3 517.8l1.4-1.4"/></g>
</svg>
</body></html>
